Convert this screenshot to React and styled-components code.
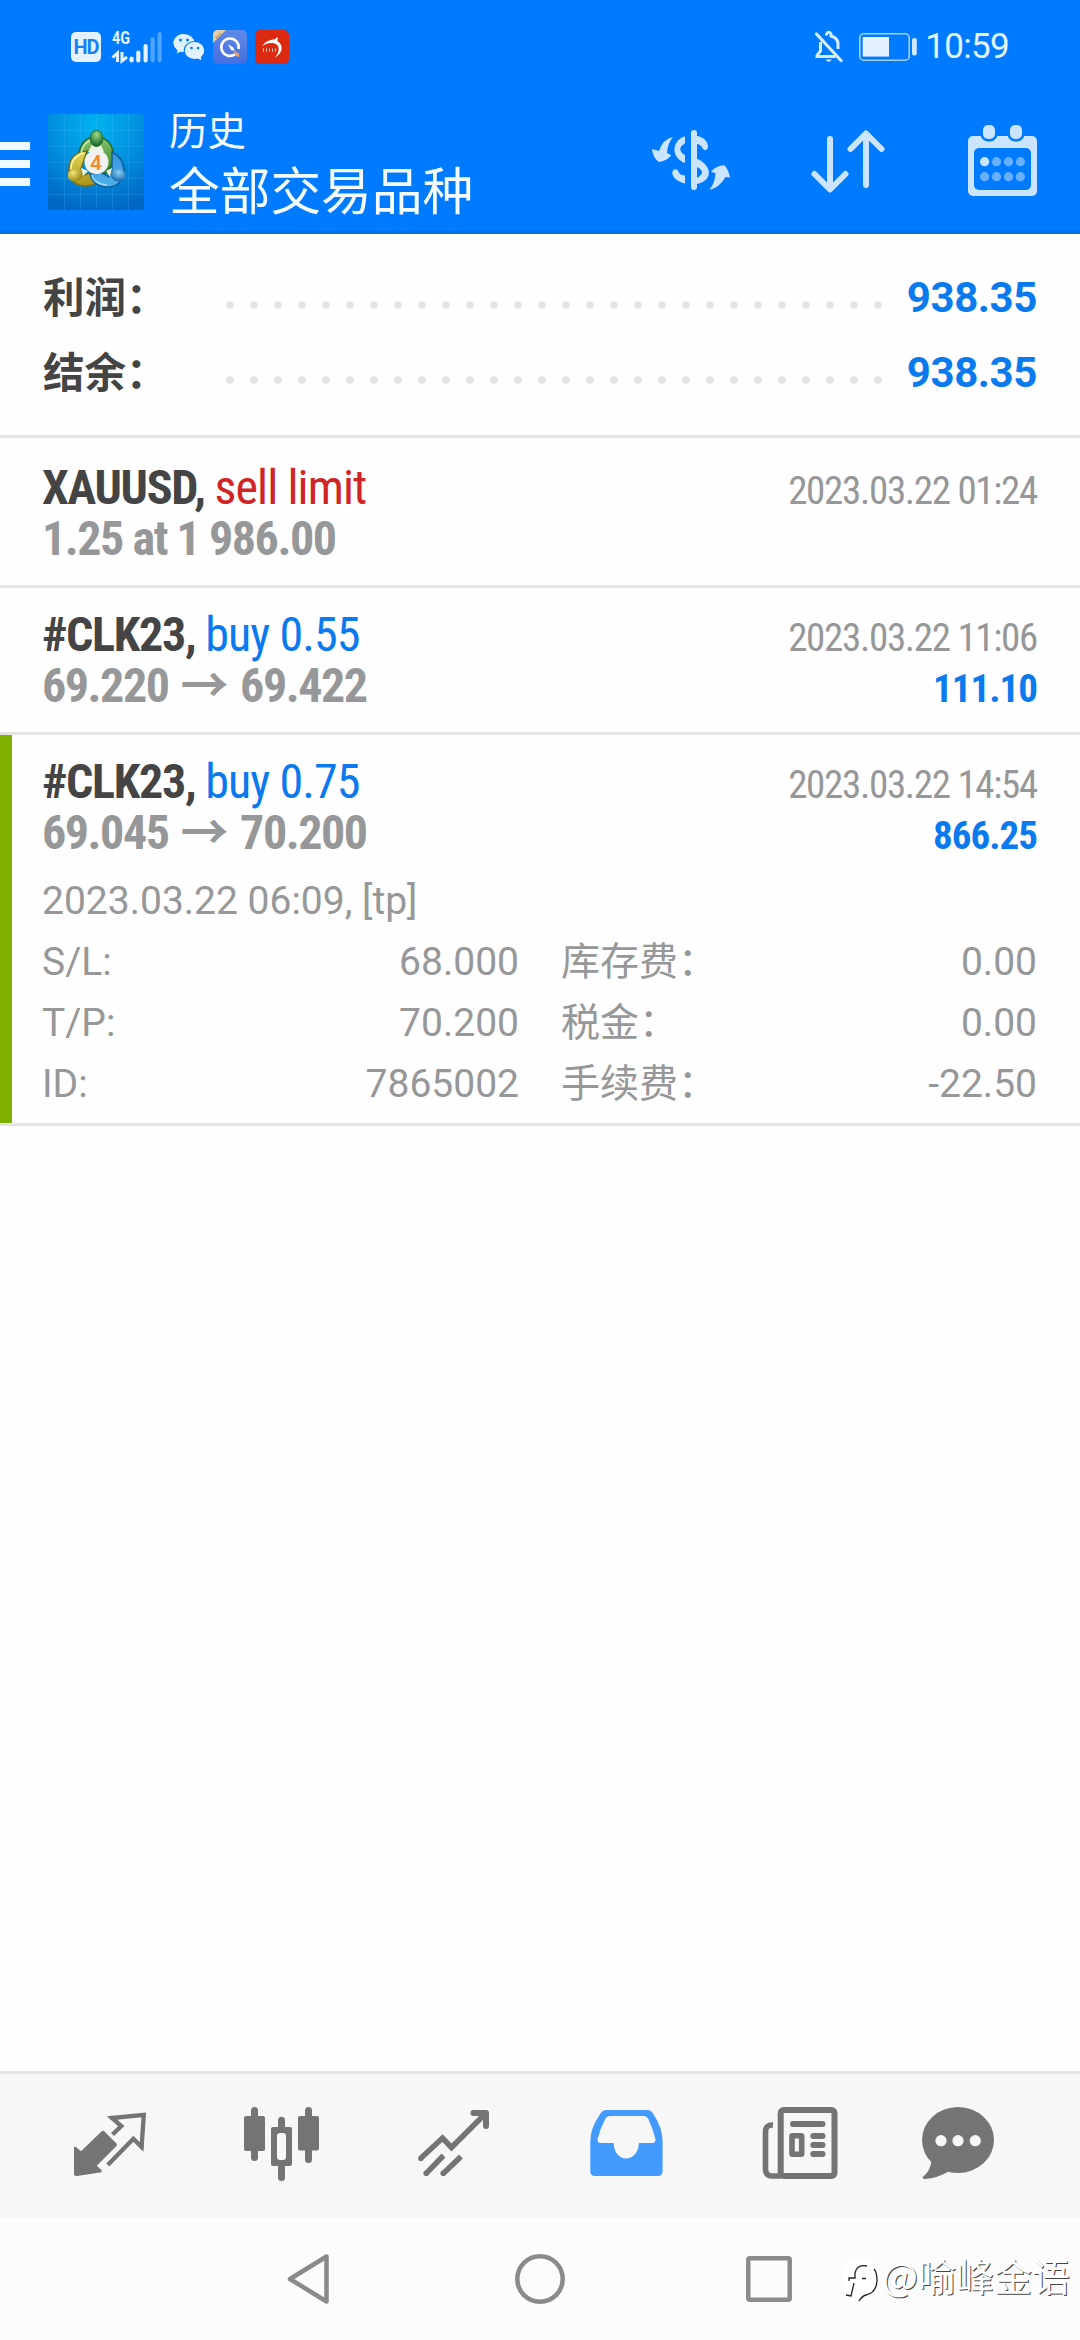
import React from "react";
import styled, { createGlobalStyle } from "styled-components";

const summary = [
  { label: "利润：", value: "938.35" },
  { label: "结余：", value: "938.35" },
];

const orders = [
  {
    symbol: "XAUUSD,",
    side: "sell limit",
    color: "#d12424",
    volume: "1.25 at 1 986.00",
    date: "2023.03.22 01:24",
  },
  {
    symbol: "#CLK23,",
    side: "buy 0.55",
    color: "#0a7aee",
    open: "69.220",
    close: "69.422",
    date: "2023.03.22 11:06",
    profit: "111.10",
  },
  {
    symbol: "#CLK23,",
    side: "buy 0.75",
    color: "#0a7aee",
    open: "69.045",
    close: "70.200",
    date: "2023.03.22 14:54",
    profit: "866.25",
    comment: "2023.03.22 06:09, [tp]",
    details: [
      ["S/L:", "68.000", "库存费：", "0.00"],
      ["T/P:", "70.200", "税金：", "0.00"],
      ["ID:", "7865002", "手续费：", "-22.50"],
    ],
  },
];

const App = () => {
  return (
    <Screen>
      <GlobalStyle />
      <StatusBar>
        <StatusGroup>
          <HdBadge>HD</HdBadge>
          <SignalIcon />
          <WechatIcon />
          <BrowserIcon />
          <RedAppIcon />
        </StatusGroup>
        <StatusGroup>
          <BellOffIcon />
          <BatteryIcon />
          <Clock>10:59</Clock>
        </StatusGroup>
      </StatusBar>
      <Header>
        <MenuButton>
          <MenuLine />
          <MenuLine />
          <MenuLine />
        </MenuButton>
        <Logo />
        <Titles>
          <Title>历史</Title>
          <Subtitle>全部交易品种</Subtitle>
        </Titles>
        <Actions>
          <CurrencyIcon />
          <SortIcon />
          <CalendarIcon />
        </Actions>
      </Header>
      <Content>
        <Summary>
          {summary.map((item) => (
            <SummaryRow key={item.label}>
              <SummaryLabel>{item.label}</SummaryLabel>
              <Dots />
              <SummaryValue>{item.value}</SummaryValue>
            </SummaryRow>
          ))}
        </Summary>
        {orders.map((order, i) => (
          <Order key={i} $first={i === 0} $open={!!order.details}>
            <OrderLine>
              <Symbol>
                {order.symbol} <Side $color={order.color}>{order.side}</Side>
              </Symbol>
              <DateText>{order.date}</DateText>
            </OrderLine>
            <OrderLine>
              {order.volume ? (
                <Price>{order.volume}</Price>
              ) : (
                <Price>
                  {order.open}
                  <Arrow>→</Arrow>
                  {order.close}
                </Price>
              )}
              {order.profit && <Profit>{order.profit}</Profit>}
            </OrderLine>
            {order.details && (
              <Details>
                <Comment>{order.comment}</Comment>
                {order.details.map(([a, b, c, d]) => (
                  <DetailRow key={a}>
                    <DetailCell>
                      <span>{a}</span>
                      <span>{b}</span>
                    </DetailCell>
                    <DetailCell>
                      <span>{c}</span>
                      <span>{d}</span>
                    </DetailCell>
                  </DetailRow>
                ))}
              </Details>
            )}
          </Order>
        ))}
      </Content>
      <TabBar>
        <Tab>
          <QuotesIcon />
        </Tab>
        <Tab>
          <CandlesIcon />
        </Tab>
        <Tab>
          <TrendIcon />
        </Tab>
        <Tab $active>
          <InboxIcon />
        </Tab>
        <Tab>
          <NewsIcon />
        </Tab>
        <Tab $last>
          <ChatIcon />
        </Tab>
      </TabBar>
      <SystemNav>
        <SystemIcons />
        <Watermark>
          <WatermarkIcon />
          @喻峰金语
        </Watermark>
      </SystemNav>
    </Screen>
  );
};

export default App;

/* status bar icons */

const SignalIcon = () => (
  <Signal width="52" height="34" viewBox="0 0 52 34">
    <text x="0" y="14" fontSize="18.5" fontWeight="700" textLength="18" lengthAdjust="spacingAndGlyphs" fill="#e4f3ff">
      4G
    </text>
    <path d="M.5 27.500 5.500 23V32M10 22V31L15 27" fill="none" stroke="#e4f3ff" strokeWidth="3" />
    <g strokeWidth="4.2" strokeLinecap="round" stroke="#e4f3ff">
      <path d="M19.6 28.5V30.5M26.3 22.5V30.5M33.6 16V30.5" />
      <path d="M40.6 9V30.5M47.6 4V30.5" stroke="#4da5ff" />
    </g>
  </Signal>
);

const WechatIcon = () => (
  <Wechat width="32" height="28" viewBox="0 0 32 28">
    <path
      d="M11 1C5 1 .6 5 .6 10c0 3 1.500 5.300 4 7L3.700 20.500 8 18.400c1.300.3 2.400.4 3.400.4"
      fill="#e0f1ff"
    />
    <ellipse cx="11" cy="10" rx="10.500" ry="9" fill="#e0f1ff" />
    <ellipse cx="21.500" cy="17.500" rx="10.800" ry="9.600" fill="#007aff" />
    <ellipse cx="21.500" cy="17.500" rx="9.700" ry="8.400" fill="#e0f1ff" />
    <path d="M23 25 28.500 27 27.500 22" fill="#e0f1ff" />
    <g fill="#007aff">
      <circle cx="7.500" cy="7" r="1.500" />
      <circle cx="14.500" cy="7" r="1.500" />
      <circle cx="18.500" cy="15" r="1.300" />
      <circle cx="25" cy="15" r="1.300" />
    </g>
  </Wechat>
);

const BrowserIcon = () => (
  <Browser width="34" height="34" viewBox="0 0 34 34">
    <defs>
      <linearGradient id="browser" x1="0" y1="0" x2="0" y2="1">
        <stop offset="0" stopColor="#5f8ae8" />
        <stop offset="1" stopColor="#456ee0" />
      </linearGradient>
    </defs>
    <rect width="34" height="34" rx="5" fill="url(#browser)" />
    <path d="M5 0H13L0 13V5Q0 0 5 0Z" fill="#e3cfae" />
    <path d="M3 8 8.500 3" stroke="#c29556" strokeWidth="2.500" strokeDasharray="1.500 1" />
    <path d="M22 24.300A8.700 8.700 0 1 1 25.500 19" fill="none" stroke="#fff" strokeWidth="2.600" />
    <path d="M15 14.500 20.500 17.500 21.500 21 18 20Z" fill="#fff" />
    <path d="M21 20.500 26 23.500 26 27 22 25.500Z" fill="#e2a466" />
  </Browser>
);

const RedAppIcon = () => (
  <svg width="34" height="34" viewBox="0 0 34 34">
    <rect width="34" height="34" rx="5" fill="#dc2911" />
    <path
      d="M7 16.500C10 11.500 15 9.500 19 9.500L23 7 22.300 11C29 15 28 23 20 27.500 25.500 21 25 14 18 13 13 12.500 10 14 7 16.500Z"
      fill="#fff"
    />
    <path d="M8 20H21" stroke="#fff" strokeWidth="3.500" strokeDasharray="1 2" opacity=".7" />
  </svg>
);

const BellOffIcon = () => (
  <Bell width="28" height="33" viewBox="0 0 28 33">
    <g fill="none" stroke="#d8eeff" strokeWidth="3">
      <path d="M1.500 4 26 30.500" strokeWidth="3.200" strokeLinecap="round" />
      <path d="M5.500 12V21L2 25.500V26.500H20.500" />
      <path d="M11.500 5.500V4Q13.700 .5 16 4V6Q23 8 23 14V19" />
    </g>
    <path d="M10.500 29.500H17Q13.700 34 10.500 29.500Z" fill="#d8eeff" />
  </Bell>
);

const BatteryIcon = () => (
  <Battery width="58" height="28" viewBox="0 0 58 28">
    <rect x=".8" y=".8" width="49.400" height="26.400" rx="4" fill="none" stroke="#9fd0ff" strokeWidth="1.600" />
    <rect x="3.700" y="4" width="26.300" height="19.600" fill="#e4f2ff" />
    <rect x="53" y="5" width="4.800" height="17.500" rx="2" fill="#cfe8ff" />
  </Battery>
);

/* header */

const Logo = () => (
  <LogoBox viewBox="0 0 96 96">
    <defs>
      <radialGradient id="sky" cx=".5" cy=".12" r=".9">
        <stop offset="0" stopColor="#00b4f0" />
        <stop offset=".5" stopColor="#0090e0" />
        <stop offset="1" stopColor="#0068c4" />
      </radialGradient>
      <linearGradient id="green" x1="0" y1="0" x2="0" y2="1">
        <stop offset="0" stopColor="#8cc46e" />
        <stop offset="1" stopColor="#2c8028" />
      </linearGradient>
      <linearGradient id="yellow" x1="0" y1="0" x2="0" y2="1">
        <stop offset="0" stopColor="#e6d95a" />
        <stop offset="1" stopColor="#a99318" />
      </linearGradient>
      <linearGradient id="blue" x1="0" y1="0" x2="0" y2="1">
        <stop offset="0" stopColor="#3794dc" />
        <stop offset="1" stopColor="#4fb2ea" />
      </linearGradient>
      <radialGradient id="greenBall" cx=".5" cy=".25" r=".7">
        <stop offset="0" stopColor="#9fd88c" />
        <stop offset="1" stopColor="#146a26" />
      </radialGradient>
      <radialGradient id="yellowBall" cx=".4" cy=".3" r=".7">
        <stop offset="0" stopColor="#f3e67c" />
        <stop offset="1" stopColor="#9a8410" />
      </radialGradient>
      <radialGradient id="blueBall" cx=".5" cy=".3" r=".7">
        <stop offset="0" stopColor="#8cd0f5" />
        <stop offset="1" stopColor="#1468b0" />
      </radialGradient>
    </defs>
    <rect width="96" height="96" fill="url(#sky)" />
    <path
      d="M16.500 0V96M32.500 0V96M48.500 0V96M64.500 0V96M80.500 0V96M0 16.500H96M0 32.500H96M0 48.500H96M0 64.500H96M0 80.500H96"
      stroke="#5cc4ff"
      strokeOpacity=".2"
    />
    <g strokeWidth="1.500">
      <path
        d="M31 42C31 29 39 23 48 23C59 23 66 31 65 43C65 50 61 57 55 61L49 53L43 37C38 37 36 40 35 44Z"
        fill="url(#green)"
        stroke="#216b2b"
      />
      <path
        d="M39 37C27 38 21 45 21 55C20 66 27 72 38 72C44 72 49 69 52 65L46 58L36 61L33 55Z"
        fill="url(#yellow)"
        stroke="#77701c"
      />
      <path
        d="M64 38C72 42 76 49 76 57C76 67 68 74 58 73C49 72 43 67 42 60L52 58L61 63L64 56Z"
        fill="url(#blue)"
        stroke="#1262a0"
      />
      <path d="M44 61C45 67 52 71 59 71" fill="none" stroke="#a5dcfa" />
      <path d="M23 55C23 47 28 41 36 39" fill="none" stroke="#fbf6b0" />
      <path d="M33 40C34 31 40 26 46 25" fill="none" stroke="#cdebb5" />
    </g>
    <path d="M44 31H53L56 38H40ZM33 54 40 57 35 62ZM64 54 58 57 62 63Z" fill="#eef5df" />
    <ellipse cx="48.500" cy="24.500" rx="6.300" ry="8" fill="url(#greenBall)" stroke="#236d2c" />
    <ellipse cx="27" cy="61" rx="7.500" ry="6.500" fill="url(#yellowBall)" transform="rotate(-15 27 61)" />
    <ellipse cx="70" cy="61" rx="7.500" ry="6.500" fill="url(#blueBall)" transform="rotate(15 70 61)" />
    <circle cx="48.500" cy="48" r="12" fill="#f1f1f1" />
    <text x="48" y="55.500" fontSize="21" fontWeight="600" textAnchor="middle" fill="#f58a2c">
      4
    </text>
  </LogoBox>
);

const CurrencyIcon = () => (
  <ActionIcon viewBox="0 2 90 90">
    <rect x="45" y="15" width="6" height="60" rx="3" />
    <path d="M39 21.300C25 26 25 43 39 48V40.300Q29.500 34 39 28.300Z" />
    <path d="M51 21C58 22 62 27 62 32Q61 37 57 34Q55 29.500 51 29Z" />
    <path d="M50 43.500C67 50 67 66 51 69V63Q61 57 51 52Z" />
    <path d="M26.300 57C28 53 32 54 32.500 57Q33.500 60 39 60.500V68.500C31 66.500 26 62 26.300 57Z" />
    <path d="M5.900 34 13 36Q17 24 26.900 22Q21.500 29 21 38L25.200 40.300Q21 46 12.800 47Q7 42.500 5.900 34Z" />
    <path d="M63.400 75Q69 68 69.600 58.300L65 56.700Q70 50.500 78.500 50.300Q82.500 55 84 62.500L79.500 62Q73 73 63.400 75Z" />
  </ActionIcon>
);

const SortIcon = () => (
  <ActionIcon viewBox="0 2 90 90">
    <path
      d="M28 24V73M12.500 59 28 74.500 43.500 59M64 70V19M48.500 34 64 18.500 79.500 34"
      fill="none"
      stroke="currentColor"
      strokeWidth="6"
      strokeLinecap="round"
      strokeLinejoin="round"
    />
  </ActionIcon>
);

const CalendarIcon = () => (
  <ActionIcon viewBox="0 2 90 90">
    <rect x="10" y="21" width="69" height="60" rx="5" />
    <rect x="16" y="33" width="57" height="42" rx="5" fill="#007aff" />
    <g stroke="#007aff" strokeWidth="5" paintOrder="stroke">
      <rect x="25" y="10" width="12" height="14" rx="5" />
      <rect x="52" y="10" width="12" height="14" rx="5" />
    </g>
    {[46.7, 61.7].map((y, row) =>
      [26.6, 38.5, 50.5, 62.4].map((x, col) => (
        <circle key={x + "-" + y} cx={x} cy={y} r="4.600" fill={row + col === 0 ? "#cbe5ff" : "#66b0ff"} />
      ))
    )}
  </ActionIcon>
);

/* tab bar */

const QuotesIcon = () => (
  <TabIcon viewBox="0 3 90 90">
    <path d="M11 48.700 13 49 18 53.300 38.500 33.500Q40 32 41.500 33.500L53.500 45.500Q54.500 46.700 53.500 48L33.800 67.700 38.600 72.300V74.300L14 78Q11 78 11 76Z" />
    <path
      d="M49.500 36.500 58.300 28 49 20 80.800 16.800 78.600 49 70.300 40.800 44.800 67"
      fill="none"
      stroke="currentColor"
      strokeWidth="4.300"
    />
    <circle cx="49" cy="20" r="2.200" />
    <circle cx="78.600" cy="49" r="2.200" />
  </TabIcon>
);

const CandlesIcon = () => (
  <TabIcon viewBox="0 3 90 90">
    <rect x="15" y="9" width="7" height="54" rx="3.500" />
    <rect x="8" y="18" width="21" height="35" rx="2" />
    <rect x="69" y="9" width="7" height="56" rx="3.500" />
    <rect x="62" y="18" width="21" height="34.500" rx="2" />
    <rect x="42" y="18.700" width="7" height="64.300" rx="3.500" />
    <rect x="35" y="29" width="21" height="39" rx="2" />
    <rect x="41" y="35" width="9" height="27" rx="3" fill="#f7f7f7" />
  </TabIcon>
);

const TrendIcon = () => (
  <TabIcon viewBox="0 3 90 90">
    <g fill="none" stroke="currentColor" strokeWidth="5.500">
      <path d="M11.500 60.500 33.500 40 42.500 49.500 77 15" />
      <path d="M64.500 15H77V28" strokeWidth="6" strokeLinecap="round" strokeLinejoin="round" />
      <path d="M17 75.700 34.500 57.500M34 75.700 52 58.500" />
    </g>
    <circle cx="11.800" cy="60.500" r="2.700" />
    <circle cx="17.200" cy="75.200" r="2.800" />
    <circle cx="34.200" cy="75.200" r="2.800" />
  </TabIcon>
);

const InboxIcon = () => (
  <TabIcon viewBox="0 3 90 90">
    <path
      fillRule="evenodd"
      d="M24 12H65.500Q69 12 71 15.500Q80.600 30 80.600 43V73Q80.600 78 76 78H13Q8.300 78 8.300 73V43Q8.300 30 18.500 15.500Q20.500 12 24 12ZM28 18Q24.500 18 23 21.500Q18 31 15.600 41Q15 45 19 45H31.700C32 66 56.500 65 56.800 45H70Q74 45 73.400 41Q71 31 66.500 21.500Q65 18 61.500 18Z"
    />
  </TabIcon>
);

const NewsIcon = () => (
  <TabIcon viewBox="0 3 90 90">
    <g fill="none" stroke="currentColor" strokeWidth="6">
      <rect x="25.700" y="12" width="53.800" height="66" rx="3" />
      <path d="M18 27Q10.500 26.500 10.500 34V71Q10.500 78 17 78H26" strokeWidth="5.600" />
      <path d="M38 26H67.500M58.300 38H67.500M58.300 47H67.500M58.300 56H67.500" strokeLinecap="round" />
      <rect x="37" y="37.800" width="9.700" height="18.400" rx=".5" strokeWidth="5.600" />
    </g>
  </TabIcon>
);

const ChatIcon = () => (
  <TabIcon viewBox="0 3 90 90">
    <ellipse cx="45" cy="42" rx="36" ry="33" />
    <path d="M15 60Q20 62 17 69 15 75 10 78.500 9 81 12 81 25 80 35.500 73.500L38 66Z" />
    <g fill="#f7f7f7">
      <circle cx="28" cy="42.700" r="5.600" />
      <circle cx="45" cy="42.700" r="5.600" />
      <circle cx="62.300" cy="42.700" r="5.600" />
    </g>
  </TabIcon>
);

const SystemIcons = () => (
  <SystemIconRow viewBox="0 0 510 54">
    <g fill="none" stroke="#8a8a8a" strokeWidth="4.500" strokeLinejoin="round">
      <path d="M5 27 41.500 4.500V49.500Z" />
      <circle cx="255" cy="27" r="22.700" />
      <rect x="463.300" y="6.300" width="41.400" height="41.400" rx="1.500" />
    </g>
  </SystemIconRow>
);

const WatermarkIcon = () => (
  <WatermarkSvg width="38" height="46" viewBox="0 0 38 46">
    <rect x="1" y="1" width="35" height="38" rx="13" fill="#fff" />
    <g fill="none" stroke="#222" strokeWidth="1.300">
      <path d="M33 11Q36 14 36 23Q35 35 25 37 21 38 18 43" />
      <path d="M26 8Q16 6 14 15V20H8V23M21 20.500H25M13 25 10 38 5 37" />
    </g>
  </WatermarkSvg>
);

const GlobalStyle = createGlobalStyle`
  body {
    margin: 0;
    background: #fefefe;
    font-family: Roboto, "Noto Sans CJK SC", sans-serif;
  }
`;

const Screen = styled.div`
  width: 1080px;
  height: 2340px;
  display: flex;
  flex-direction: column;
  overflow: hidden;
  background: #fefefe;
`;

const StatusBar = styled.div`
  height: 93px;
  box-sizing: border-box;
  padding: 0 71px;
  display: flex;
  justify-content: space-between;
  align-items: center;
  background: #007aff;
`;
const StatusGroup = styled.div`
  display: flex;
  align-items: center;
`;
const HdBadge = styled.div`
  width: 30px;
  height: 30px;
  border-radius: 5px;
  background: #e4f2ff;
  color: #1680f5;
  font-size: 20px;
  font-weight: 700;
  line-height: 31px;
  text-align: center;
  letter-spacing: -1px;
`;
const Signal = styled.svg`
  margin-left: 11px;
  overflow: visible;
`;
const Wechat = styled.svg`
  margin-left: 9px;
`;
const Browser = styled.svg`
  margin: 0 8px;
`;
const Bell = styled.svg`
  margin-right: 16px;
`;
const Battery = styled.svg`
  margin-right: 8px;
`;
const Clock = styled.span`
  color: #e4f6ff;
  font-size: 35px;
  line-height: 40px;
  letter-spacing: -0.7px;
`;

const Header = styled.div`
  height: 138px;
  border-bottom: 3px solid #0070e0;
  display: flex;
  align-items: center;
  background: #007aff;
`;
const MenuButton = styled.div`
  width: 30px;
  margin-right: 18px;
  display: flex;
  flex-direction: column;
  gap: 10px;
  padding-top: 4px;
`;
const MenuLine = styled.div`
  height: 8px;
  background: #f0f9ff;
`;
const LogoBox = styled.svg`
  width: 96px;
  height: 96px;
`;
const Titles = styled.div`
  margin-left: 25px;
  padding-top: 5px;
  color: #f4fcff;
`;
const Title = styled.div`
  font-size: 38.5px;
  line-height: 50px;
`;
const Subtitle = styled.div`
  font-size: 50.7px;
  line-height: 60px;
  padding-top: 6px;
`;
const Actions = styled.div`
  margin-left: auto;
  padding-right: 32px;
  display: flex;
  gap: 66px;
`;
const ActionIcon = styled.svg`
  width: 90px;
  height: 90px;
  color: #cbe5ff;
  fill: currentColor;
`;

const Content = styled.div`
  flex: 1;
`;
const Summary = styled.div`
  padding: 26px 43px 25px 42px;
  border-bottom: 3px solid #e4e4e4;
`;
const SummaryRow = styled.div`
  height: 75px;
  display: flex;
  align-items: center;
  line-height: 75px;
`;
const SummaryLabel = styled.div`
  width: 175px;
  padding: 2px 0 0 1px;
  color: #444;
  font-size: 41.5px;
  font-weight: 700;
`;
const Dots = styled.div`
  width: 672px;
  height: 8px;
  margin-top: 15px;
  background: radial-gradient(circle at center, #e4e4e4 3.5px, transparent 4.2px) 0 0 / 24px 8px repeat-x;
`;
const SummaryValue = styled.div`
  margin-left: auto;
  color: #0a7aee;
  font-size: 42px;
  font-weight: 700;
  letter-spacing: -0.4px;
`;

const Order = styled.div`
  padding: ${(p) => (p.$first ? 24 : 21)}px 43px ${(p) => (p.$open ? 8 : 21)}px 42px;
  border-bottom: 3px solid #e4e4e4;
  box-shadow: ${(p) => (p.$open ? "inset 12px 0 #7fb000" : "none")};
`;
const OrderLine = styled.div`
  height: 51px;
  line-height: 51px;
  display: flex;
  justify-content: space-between;
  align-items: baseline;
  font-family: "Roboto Condensed", Roboto, "Noto Sans CJK SC", sans-serif;
  font-stretch: 75%;
  white-space: nowrap;
`;
const Symbol = styled.div`
  color: #444;
  font-size: 48px;
  font-weight: 700;
  letter-spacing: -1.3px;
`;
const Side = styled.span`
  color: ${(p) => p.$color};
  font-weight: 400;
  letter-spacing: -0.9px;
`;
const Price = styled.div`
  color: #969799;
  font-size: 48px;
  font-weight: 700;
  letter-spacing: -1.45px;
`;
const Arrow = styled.span`
  margin: 0 13px 0 12px;
  font-family: "Noto Sans CJK SC", sans-serif;
  line-height: 0;
`;
const DateText = styled.div`
  color: #969799;
  font-size: 39px;
  letter-spacing: -1.3px;
`;
const Profit = styled.div`
  color: #0a7aee;
  font-size: 39px;
  font-weight: 700;
  letter-spacing: -1px;
`;

const Details = styled.div`
  padding-top: 13px;
  color: #969799;
  font-size: 39px;
  line-height: 61px;
`;
const Comment = styled.div``;
const DetailRow = styled.div`
  height: 61px;
  display: grid;
  grid-template-columns: 477px 476px;
  column-gap: 42px;
`;
const DetailCell = styled.div`
  display: flex;
  justify-content: space-between;
`;

const TabBar = styled.div`
  height: 144px;
  padding-left: 21.5px;
  border-top: 3px solid #e4e4e4;
  display: flex;
  align-items: center;
  background: #f7f7f7;
`;
const Tab = styled.div`
  width: ${(p) => (p.$last ? 143 : 173)}px;
  display: flex;
  justify-content: center;
  color: ${(p) => (p.$active ? "#439bff" : "#747474")};
`;
const TabIcon = styled.svg`
  width: 90px;
  height: 90px;
  fill: currentColor;
`;

const SystemNav = styled.div`
  position: relative;
  height: 122px;
  display: flex;
  justify-content: center;
  align-items: center;
  background: #fcfcfc;
`;
const SystemIconRow = styled.svg`
  width: 510px;
  height: 54px;
`;
const Watermark = styled.div`
  position: absolute;
  right: 10px;
  top: 32px;
  display: flex;
  color: #fff;
  font-family: "Noto Sans CJK SC", sans-serif;
  font-size: 38px;
  line-height: 50px;
  text-shadow: 1px 1px 0 #444;
`;
const WatermarkSvg = styled.svg`
  margin-right: 3px;
  margin-top: 8px;
`;
